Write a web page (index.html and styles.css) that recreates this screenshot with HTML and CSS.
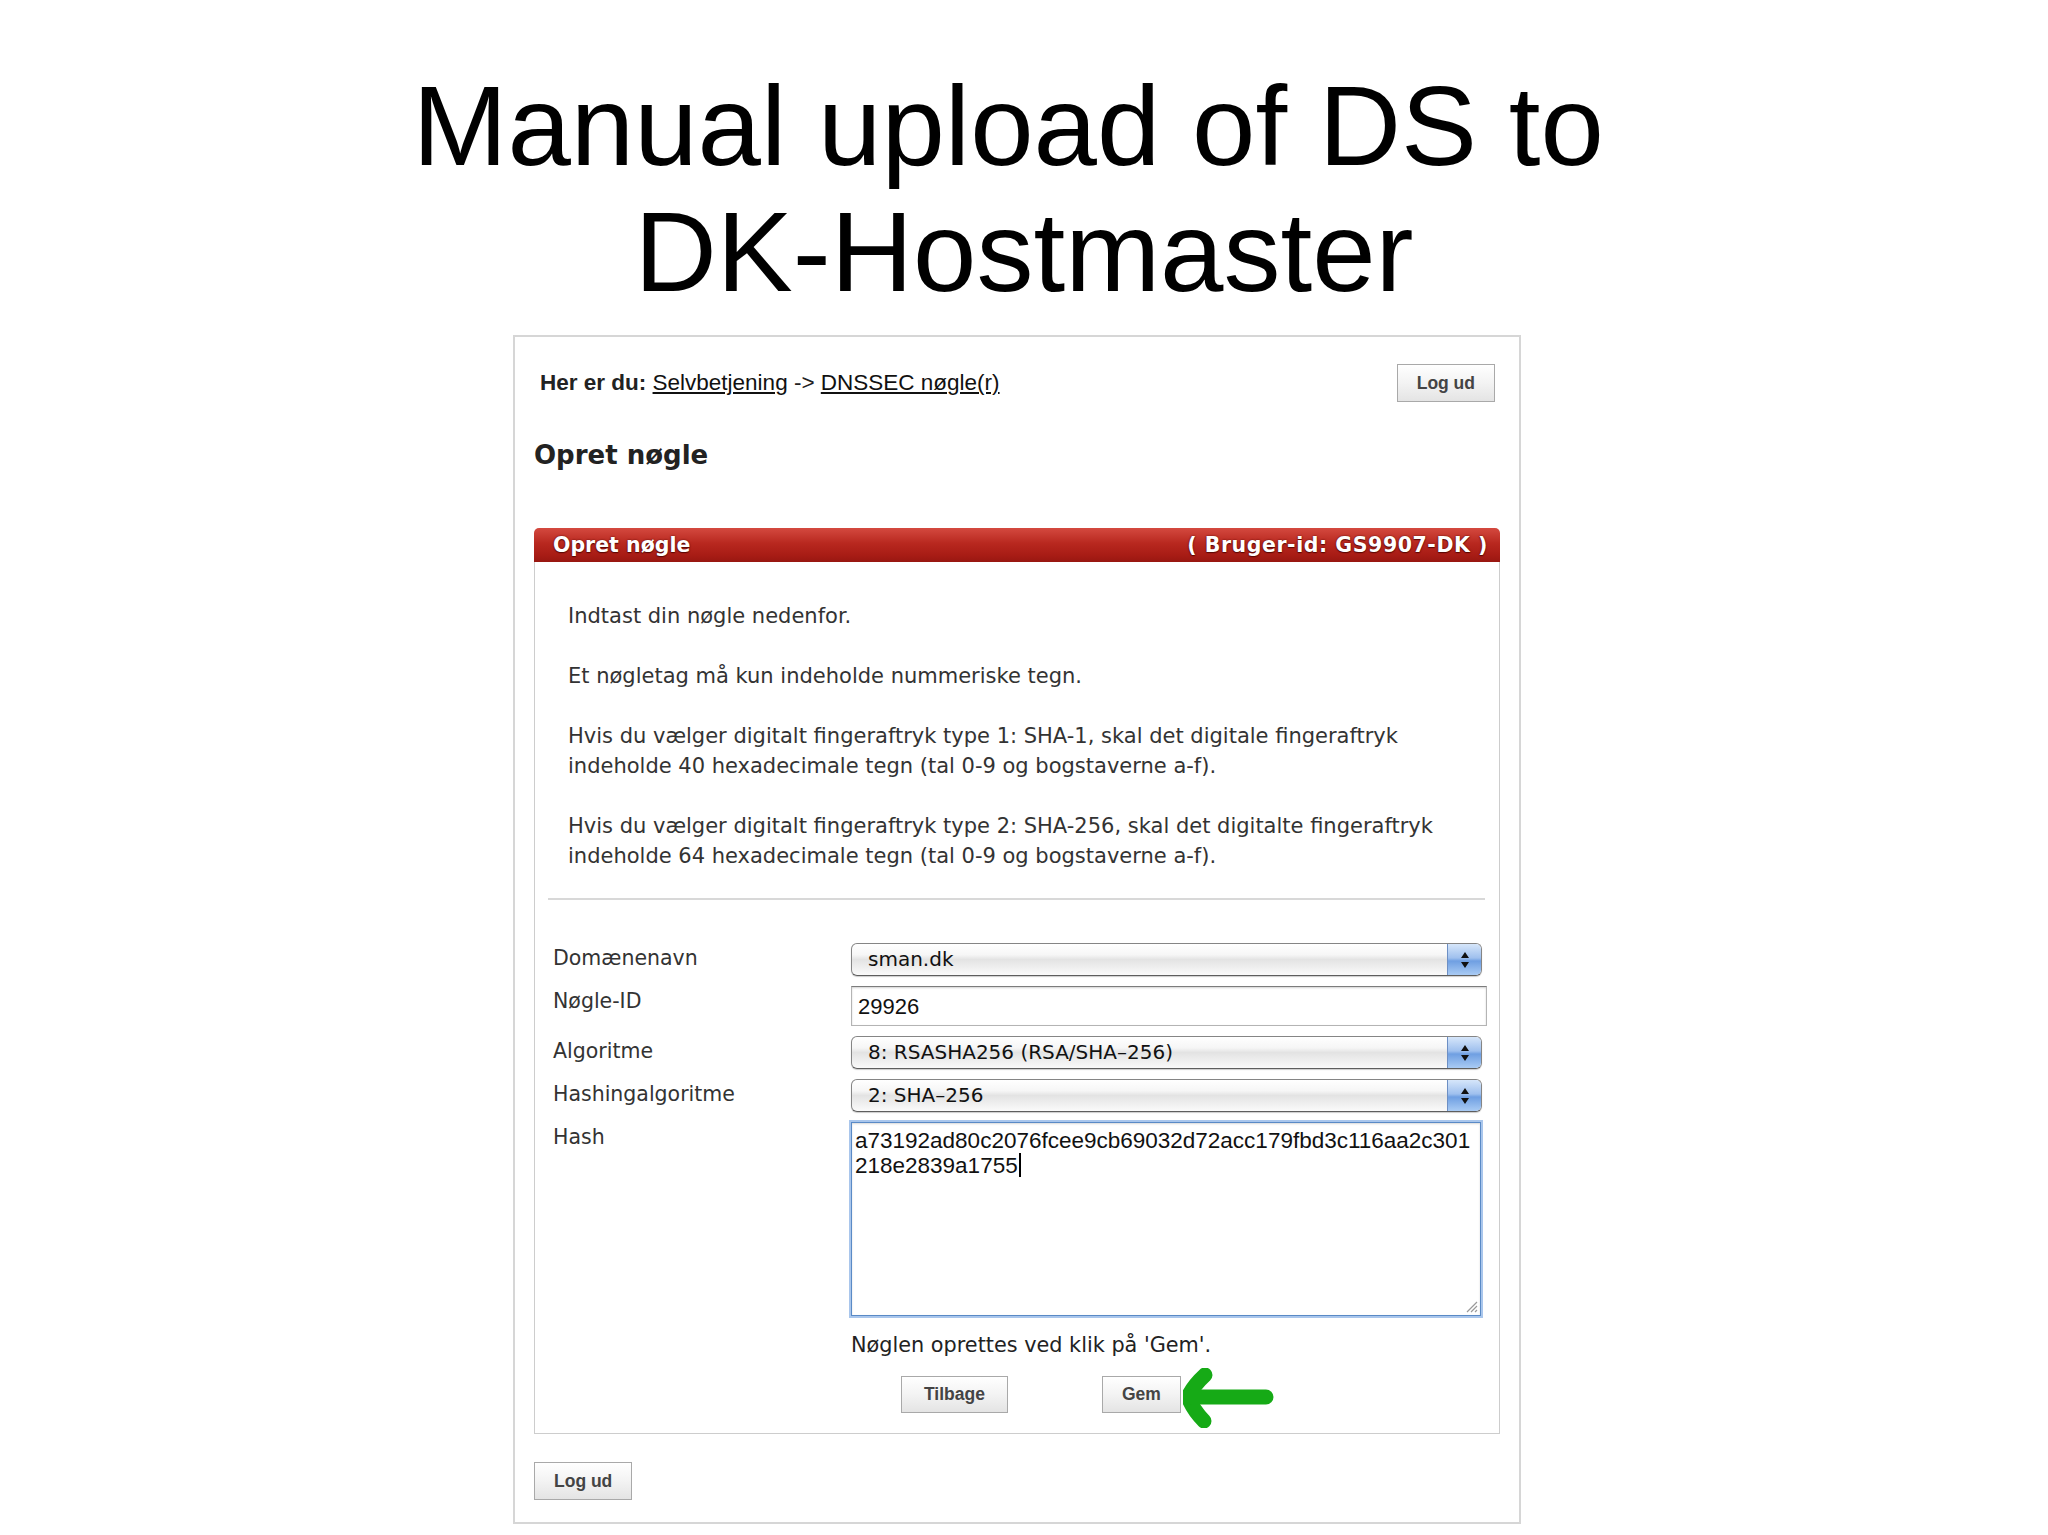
FILE: index.html
```html
<!DOCTYPE html>
<html lang="da">
<head>
    <meta charset="UTF-8">
    <title>Manual upload of DS to DK-Hostmaster</title>
    <link rel="stylesheet" href="styles.css">
</head>
<body>
    <h1 class="slide-title">Manual upload of DS to&nbsp;<br>DK-Hostmaster</h1>

    <div class="page">
        <div class="topbar">
            <div class="breadcrumb"><b>Her er du:</b> <a href="#">Selvbetjening</a> -&gt; <a href="#">DNSSEC nøgle(r)</a></div>
            <button class="btn">Log ud</button>
        </div>

        <h2 class="page-heading">Opret nøgle</h2>

        <div class="panel">
            <div class="panel-head">
                <span>Opret nøgle</span>
                <span class="user-id">( Bruger-id: GS9907-DK )</span>
            </div>
            <div class="panel-body">
                <div class="intro">
                    <p>Indtast din nøgle nedenfor.</p>
                    <p>Et nøgletag må kun indeholde nummeriske tegn.</p>
                    <p>Hvis du vælger digitalt fingeraftryk type 1: SHA-1, skal det digitale fingeraftryk indeholde 40 hexadecimale tegn (tal 0-9 og bogstaverne a-f).</p>
                    <p>Hvis du vælger digitalt fingeraftryk type 2: SHA-256, skal det digitalte fingeraftryk indeholde 64 hexadecimale tegn (tal 0-9 og bogstaverne a-f).</p>
                </div>
                <hr class="divider">

                <div class="form-grid">
                    <label class="field-label">Domænenavn</label>
                    <div class="select">
                        <span class="select-value">sman.dk</span>
                        <span class="select-arrows"><svg width="12" height="20" viewBox="0 0 12 20"><path d="M2 8 L6 2 L10 8 Z M2 12 L10 12 L6 18 Z" fill="#111"/></svg></span>
                    </div>

                    <label class="field-label">Nøgle-ID</label>
                    <div class="text-input">29926</div>

                    <label class="field-label">Algoritme</label>
                    <div class="select">
                        <span class="select-value">8: RSASHA256 (RSA/SHA&#8211;256)</span>
                        <span class="select-arrows"><svg width="12" height="20" viewBox="0 0 12 20"><path d="M2 8 L6 2 L10 8 Z M2 12 L10 12 L6 18 Z" fill="#111"/></svg></span>
                    </div>

                    <label class="field-label">Hashingalgoritme</label>
                    <div class="select">
                        <span class="select-value">2: SHA&#8211;256</span>
                        <span class="select-arrows"><svg width="12" height="20" viewBox="0 0 12 20"><path d="M2 8 L6 2 L10 8 Z M2 12 L10 12 L6 18 Z" fill="#111"/></svg></span>
                    </div>

                    <label class="field-label">Hash</label>
                    <div class="hash-box">a73192ad80c2076fcee9cb69032d72acc179fbd3c116aa2c301218e2839a1755<span class="caret"></span>
                        <svg class="grip" width="14" height="14" viewBox="0 0 14 14"><path d="M13 3 L3 13 M13 7 L7 13 M13 11 L11 13" stroke="#999" stroke-width="1.2"/></svg>
                    </div>

                    <div class="note">Nøglen oprettes ved klik på 'Gem'.</div>

                    <div class="actions">
                        <button class="btn btn-back">Tilbage</button>
                        <button class="btn">Gem</button>
                        <svg class="pointer" width="92" height="60" viewBox="0 0 92 60">
                            <path d="M22 7 Q10 18 5 29 Q10 42 21 53" fill="none" stroke="#16aa16" stroke-width="15" stroke-linecap="round" stroke-linejoin="round"/>
                            <path d="M9 29 H83" fill="none" stroke="#16aa16" stroke-width="15" stroke-linecap="round"/>
                        </svg>
                    </div>
                </div>
            </div>
        </div>

        <button class="btn btn-bottom">Log ud</button>
    </div>
</body>
</html>
```

FILE: styles.css
```css
/* Slide med skærmbillede af DK-Hostmaster selvbetjening */
body { margin: 0; background-color: #fff; color: #000; font-family: "Liberation Sans", Arial, sans-serif; }

.slide-title { margin: 0; padding-top: 63px; font-size: 114px; line-height: 126px; font-weight: normal; text-align: center; color: #000; }

.page { width: 966px; margin: 20px 0 0 513px; padding: 0 19px 22px; border: 2px solid #d6d6d6; background-color: #fff; }

.topbar { display: flex; align-items: center; justify-content: space-between; margin-top: 27px; padding: 0 5px 0 6px; }
.breadcrumb { font-size: 22.5px; color: #222; }
.breadcrumb a { color: #111; text-decoration: underline; }

.btn { height: 38px; padding: 0 19px; border: 1px solid #a9a9a9; background: linear-gradient(#ffffff, #f3f3f3 50%, #e4e4e4); font-family: "Liberation Sans", Arial, sans-serif; font-weight: bold; font-size: 17.5px; color: #444; cursor: pointer; }
.btn-bottom { display: block; margin-top: 28px; }

.page-heading { margin: 38px 0 0; font-family: "DejaVu Sans", Verdana, sans-serif; font-size: 26px; line-height: 30px; font-weight: bold; color: #222; }

.panel { margin-top: 58px; }
.panel-head { display: flex; justify-content: space-between; align-items: center; height: 34px; padding: 0 12px 0 19px; border-radius: 5px 5px 0 0; background: linear-gradient(#d4493f, #b8281f 45%, #a81c15 80%, #981711); font-family: "DejaVu Sans", Verdana, sans-serif; font-weight: bold; font-size: 20.5px; color: #fff; text-shadow: 0 0 2px #5a0804, 0 1px 1px #5a0804; }
.user-id { letter-spacing: 0.55px; }
.panel-body { border: 1px solid #cdcdcd; border-top: none; padding-bottom: 20px; font-family: "DejaVu Sans", Verdana, sans-serif; color: #333; }

.intro { padding: 39px 20px 0 33px; font-size: 21px; line-height: 30px; }
.intro p { margin: 0 0 30px; }
.intro p:last-child { margin-bottom: 0; }

.divider { height: 0; margin: 27px 14px 0 13px; border: 0; border-top: 2px solid #d8d8d8; }

.form-grid { display: grid; grid-template-columns: 298px 636px; row-gap: 10px; margin-top: 43px; padding-left: 18px; }
.field-label { font-size: 20.5px; line-height: 30px; color: #333; }

.select { display: flex; width: 631px; height: 33px; box-sizing: border-box; border: 1px solid #858585; border-bottom-color: #5e5e5e; border-radius: 6px; overflow: hidden; background: linear-gradient(#ffffff, #f6f6f6 35%, #e3e3e3 50%, #ececec 70%, #fafafa); box-shadow: 0 1px 1px rgba(0,0,0,0.2); }
.select-value { flex-grow: 1; padding-left: 16px; font-size: 20px; line-height: 31px; color: #111; white-space: nowrap; }
.select-arrows { display: flex; align-items: center; justify-content: center; width: 33px; border-left: 1px solid #6d8fc4; background: linear-gradient(#d6e6fa, #9fc0ee 45%, #6f9fe2 55%, #a9cbf4); }

.text-input { height: 40px; box-sizing: border-box; padding-left: 6px; border: 1px solid #b4b4b4; border-top-color: #7c7c7c; box-shadow: inset 0 1px 2px rgba(0,0,0,0.18); font-family: "Liberation Sans", Arial, sans-serif; font-size: 22px; line-height: 40px; color: #111; }

.hash-box { position: relative; width: 630px; height: 194px; box-sizing: border-box; padding: 5px 3px; border: 1px solid #5a8ac6; box-shadow: 0 0 0 2px #a9c6ec, inset 0 1px 2px rgba(0,0,0,0.15); font-family: "Liberation Sans", Arial, sans-serif; font-size: 22.5px; line-height: 25px; color: #111; word-break: break-all; }
.caret { display: inline-block; width: 0; height: 24px; margin-left: 1px; border-left: 2px solid #000; vertical-align: -4px; }
.grip { position: absolute; right: 2px; bottom: 2px; }

.note { grid-column: 2; margin-top: 4px; font-size: 20.8px; line-height: 30px; color: #222; }

.actions { grid-column: 2; display: flex; align-items: flex-start; margin-top: 6px; padding-left: 50px; }
.actions .btn { height: 37px; }
.btn-back { margin-right: 94px; padding: 0 22px; }
.pointer { margin: -8px 0 -15px 2px; }
```
